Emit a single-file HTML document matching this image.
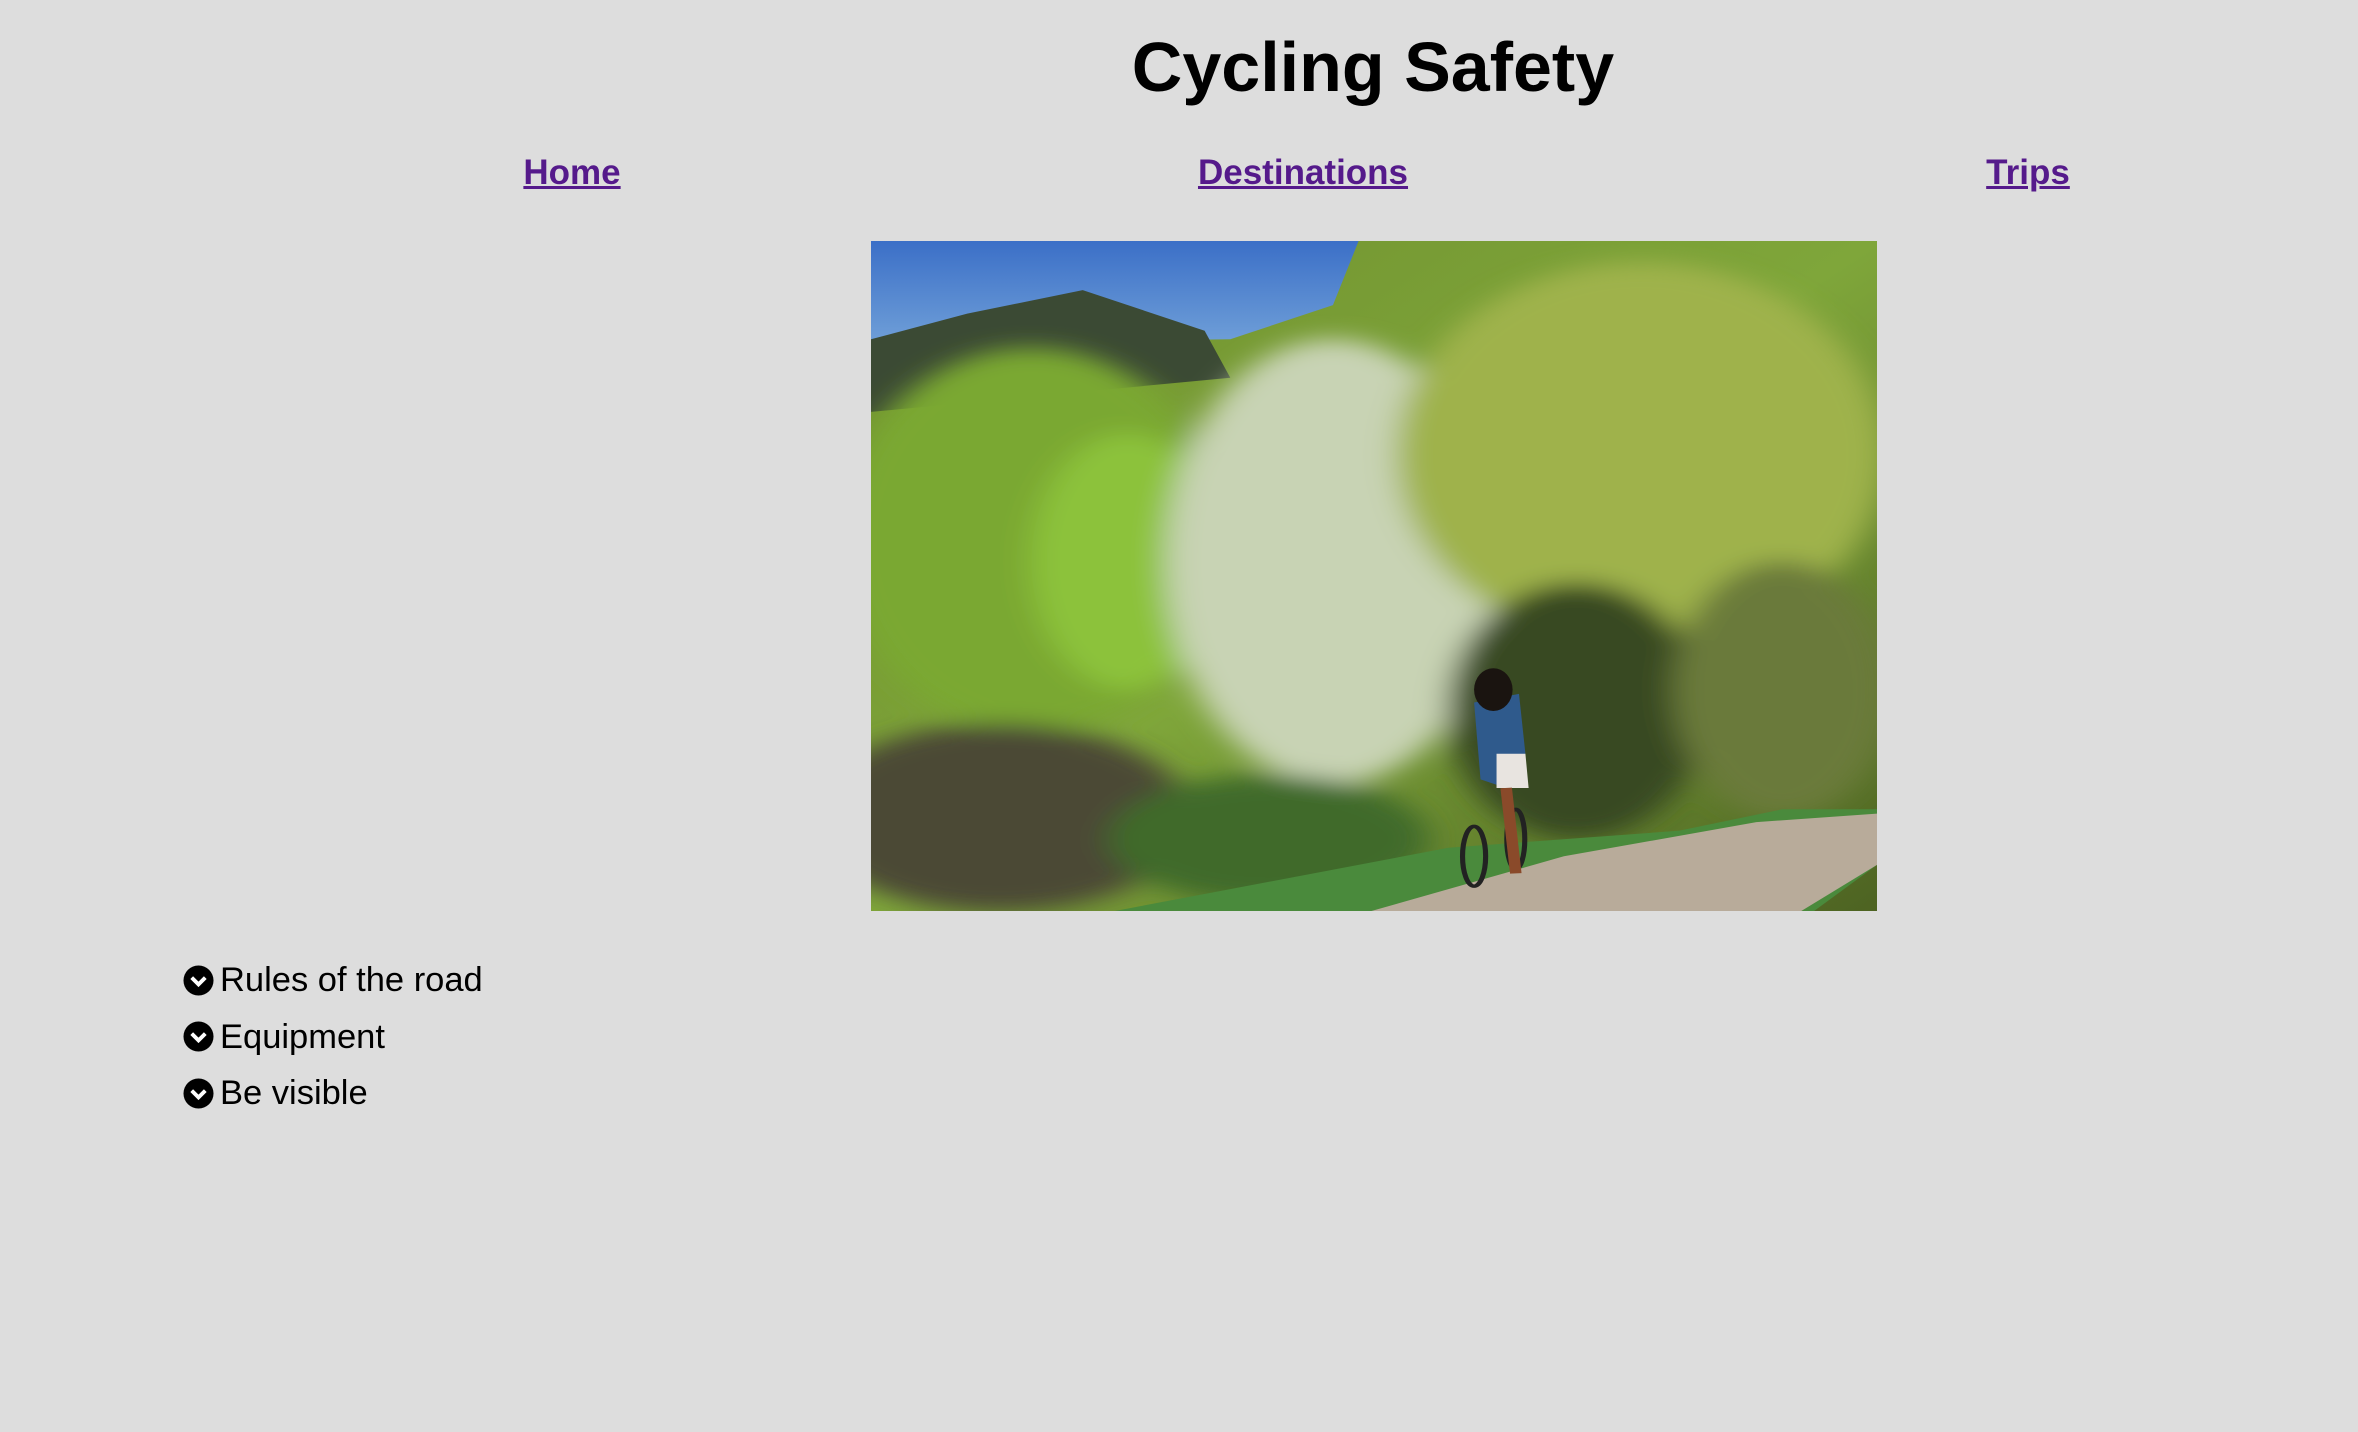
<!DOCTYPE html>
<html><head><meta charset="utf-8"><style>
html,body{margin:0;padding:0;background:#dddddd;width:2358px;height:1432px;overflow:hidden;font-family:"Liberation Sans",Arial,sans-serif;}
h1{position:absolute;left:0;width:2746px;text-align:center;top:22px;margin:0;font-size:70px;font-weight:bold;color:#000;line-height:90px;}
.nav a{position:absolute;top:151px;font-size:35px;font-weight:bold;color:#551a8b;text-decoration:underline;line-height:44px;transform:translateX(-50%);}
.img{position:absolute;left:871px;top:241px;width:1006px;height:670px;}
.list{position:absolute;left:183px;top:952px;font-size:34.5px;line-height:56.5px;color:#000;}
.list div{display:flex;align-items:center;height:56.5px;}
.list svg{width:31px;height:31px;margin-right:6px;}
</style></head><body>
<h1>Cycling Safety</h1>
<div class="nav">
<a style="left:572px">Home</a>
<a style="left:1303px">Destinations</a>
<a style="left:2028px">Trips</a>
</div>
<svg class="img" viewBox="0 0 1568 1568" preserveAspectRatio="none">
<defs>
<linearGradient id="sky" x1="0" y1="0" x2="0" y2="1"><stop offset="0" stop-color="#3b6fc7"/><stop offset="1" stop-color="#6f9fd8"/></linearGradient>
<linearGradient id="gr" x1="0" y1="0" x2="1" y2="1"><stop offset="0" stop-color="#6f8f2e"/><stop offset="0.5" stop-color="#7fa63a"/><stop offset="1" stop-color="#4d6322"/></linearGradient>
<filter id="bl"><feGaussianBlur stdDeviation="25"/></filter>
</defs>
<rect width="1568" height="1568" fill="url(#gr)"/>
<path d="M0 0 L760 0 L720 150 L560 230 L0 240 Z" fill="url(#sky)"/>
<path d="M0 230 L150 170 L330 115 L520 210 L560 320 L0 400 Z" fill="#3b4a34"/>
<g filter="url(#bl)">
<ellipse cx="250" cy="700" rx="300" ry="450" fill="#7aa830"/>
<ellipse cx="400" cy="750" rx="150" ry="300" fill="#8cc23a"/>
<ellipse cx="720" cy="750" rx="260" ry="520" fill="#c8d3b4"/>
<ellipse cx="1200" cy="500" rx="380" ry="450" fill="#9fb24c"/>
<ellipse cx="1100" cy="1100" rx="200" ry="300" fill="#394a22"/>
<ellipse cx="1420" cy="1050" rx="170" ry="300" fill="#6b7a3a"/>
<ellipse cx="200" cy="1350" rx="300" ry="220" fill="#4b4a36"/>
<ellipse cx="620" cy="1400" rx="250" ry="150" fill="#3f6b2c"/>
</g>
<path d="M380 1568 L900 1420 L1260 1380 L1420 1330 L1568 1330 L1568 1460 L1470 1568 Z" fill="#4a8a3c"/>
<path d="M780 1568 L1080 1440 L1380 1360 L1568 1340 L1568 1460 L1450 1568 Z" fill="#b8ab9a"/>
<path d="M940 1080 L1010 1060 L1020 1200 L990 1280 L950 1260 Z" fill="#2f5a8c"/>
<ellipse cx="970" cy="1050" rx="30" ry="50" fill="#1a1410"/>
<path d="M975 1200 L1020 1200 L1025 1280 L975 1280 Z" fill="#e8e4e0"/>
<ellipse cx="940" cy="1440" rx="18" ry="70" fill="none" stroke="#222" stroke-width="8"/>
<ellipse cx="1005" cy="1400" rx="14" ry="70" fill="none" stroke="#222" stroke-width="8"/>
<path d="M990 1280 L1005 1480" stroke="#8a4a2a" stroke-width="18"/>
</svg>
<div class="list">
<div><svg viewBox="0 0 32 32"><circle cx="16" cy="16" r="15.5" fill="#000"/><path d="M9 13 L16 20 L23 13" stroke="#fff" stroke-width="4" fill="none"/></svg>Rules of the road</div>
<div><svg viewBox="0 0 32 32"><circle cx="16" cy="16" r="15.5" fill="#000"/><path d="M9 13 L16 20 L23 13" stroke="#fff" stroke-width="4" fill="none"/></svg>Equipment</div>
<div><svg viewBox="0 0 32 32"><circle cx="16" cy="16" r="15.5" fill="#000"/><path d="M9 13 L16 20 L23 13" stroke="#fff" stroke-width="4" fill="none"/></svg>Be visible</div>
</div>
</body></html>
